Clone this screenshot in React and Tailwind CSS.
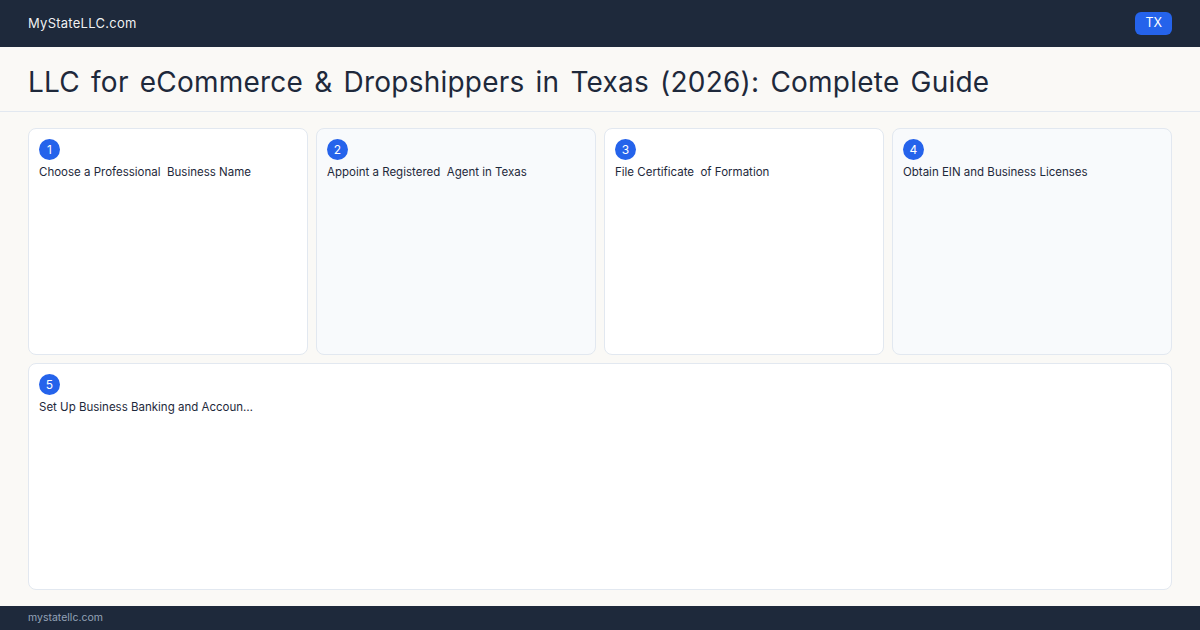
const steps = [
  { n: 1, title: 'Choose a Professional\u00a0 Business Name', bg: 'bg-white' },
  { n: 2, title: 'Appoint a Registered\u00a0 Agent in Texas', bg: 'bg-[#f8fafc]' },
  { n: 3, title: 'File Certificate\u00a0 of Formation', bg: 'bg-white' },
  { n: 4, title: 'Obtain EIN and Business Licenses', bg: 'bg-[#f8fafc]' },
];

const StepCard = ({ n, title, bg, className = '' }) => (
  <div className={`rounded-lg border border-[#e2e8f0] p-2.5 ${bg} ${className}`}>
    <div className="w-[21px] h-[21px] rounded-full bg-[#2563eb] text-white text-[12px] flex items-center justify-center">
      {n}
    </div>
    <div className="mt-[4px] text-[11.5px] text-[#1e293b] whitespace-nowrap">{title}</div>
  </div>
);

const App = () => {
  return (
    <div className="w-[1200px] h-[630px] flex flex-col bg-[#faf9f6] font-['Inter',sans-serif]">
      {/* Top bar */}
      <div className="h-[47px] shrink-0 bg-[#1e293b] flex items-center justify-between px-7">
        <div className="text-[13px] text-white/95 tracking-[0.02em]">MyStateLLC.com</div>
        <div className="px-2.5 h-[23px] flex items-center rounded-md bg-[#2563eb] text-white text-[12.5px]">TX</div>
      </div>

      {/* Title */}
      <div className="h-[65px] shrink-0 flex items-center px-7 pt-[6px] border-b border-[#e2e8f0]">
        <h1 className="text-[28px] text-[#1e293b] tracking-[0.008em] [word-spacing:3px]">
          LLC for eCommerce &amp; Dropshippers in Texas (2026): Complete Guide
        </h1>
      </div>

      {/* Steps */}
      <div className="flex-1 min-h-0 px-7 py-4 grid grid-cols-4 grid-rows-2 gap-2">
        {steps.map(s => (
          <StepCard key={s.n} {...s} />
        ))}
        <StepCard
          n={5}
          title="Set Up Business Banking and Accoun…"
          bg="bg-white"
          className="col-span-4"
        />
      </div>

      {/* Footer */}
      <div className="h-6 shrink-0 bg-[#1e293b] flex items-center px-7">
        <div className="text-[10.5px] text-[#94a3b8]">mystatellc.com</div>
      </div>
    </div>
  );
};

export default App;
